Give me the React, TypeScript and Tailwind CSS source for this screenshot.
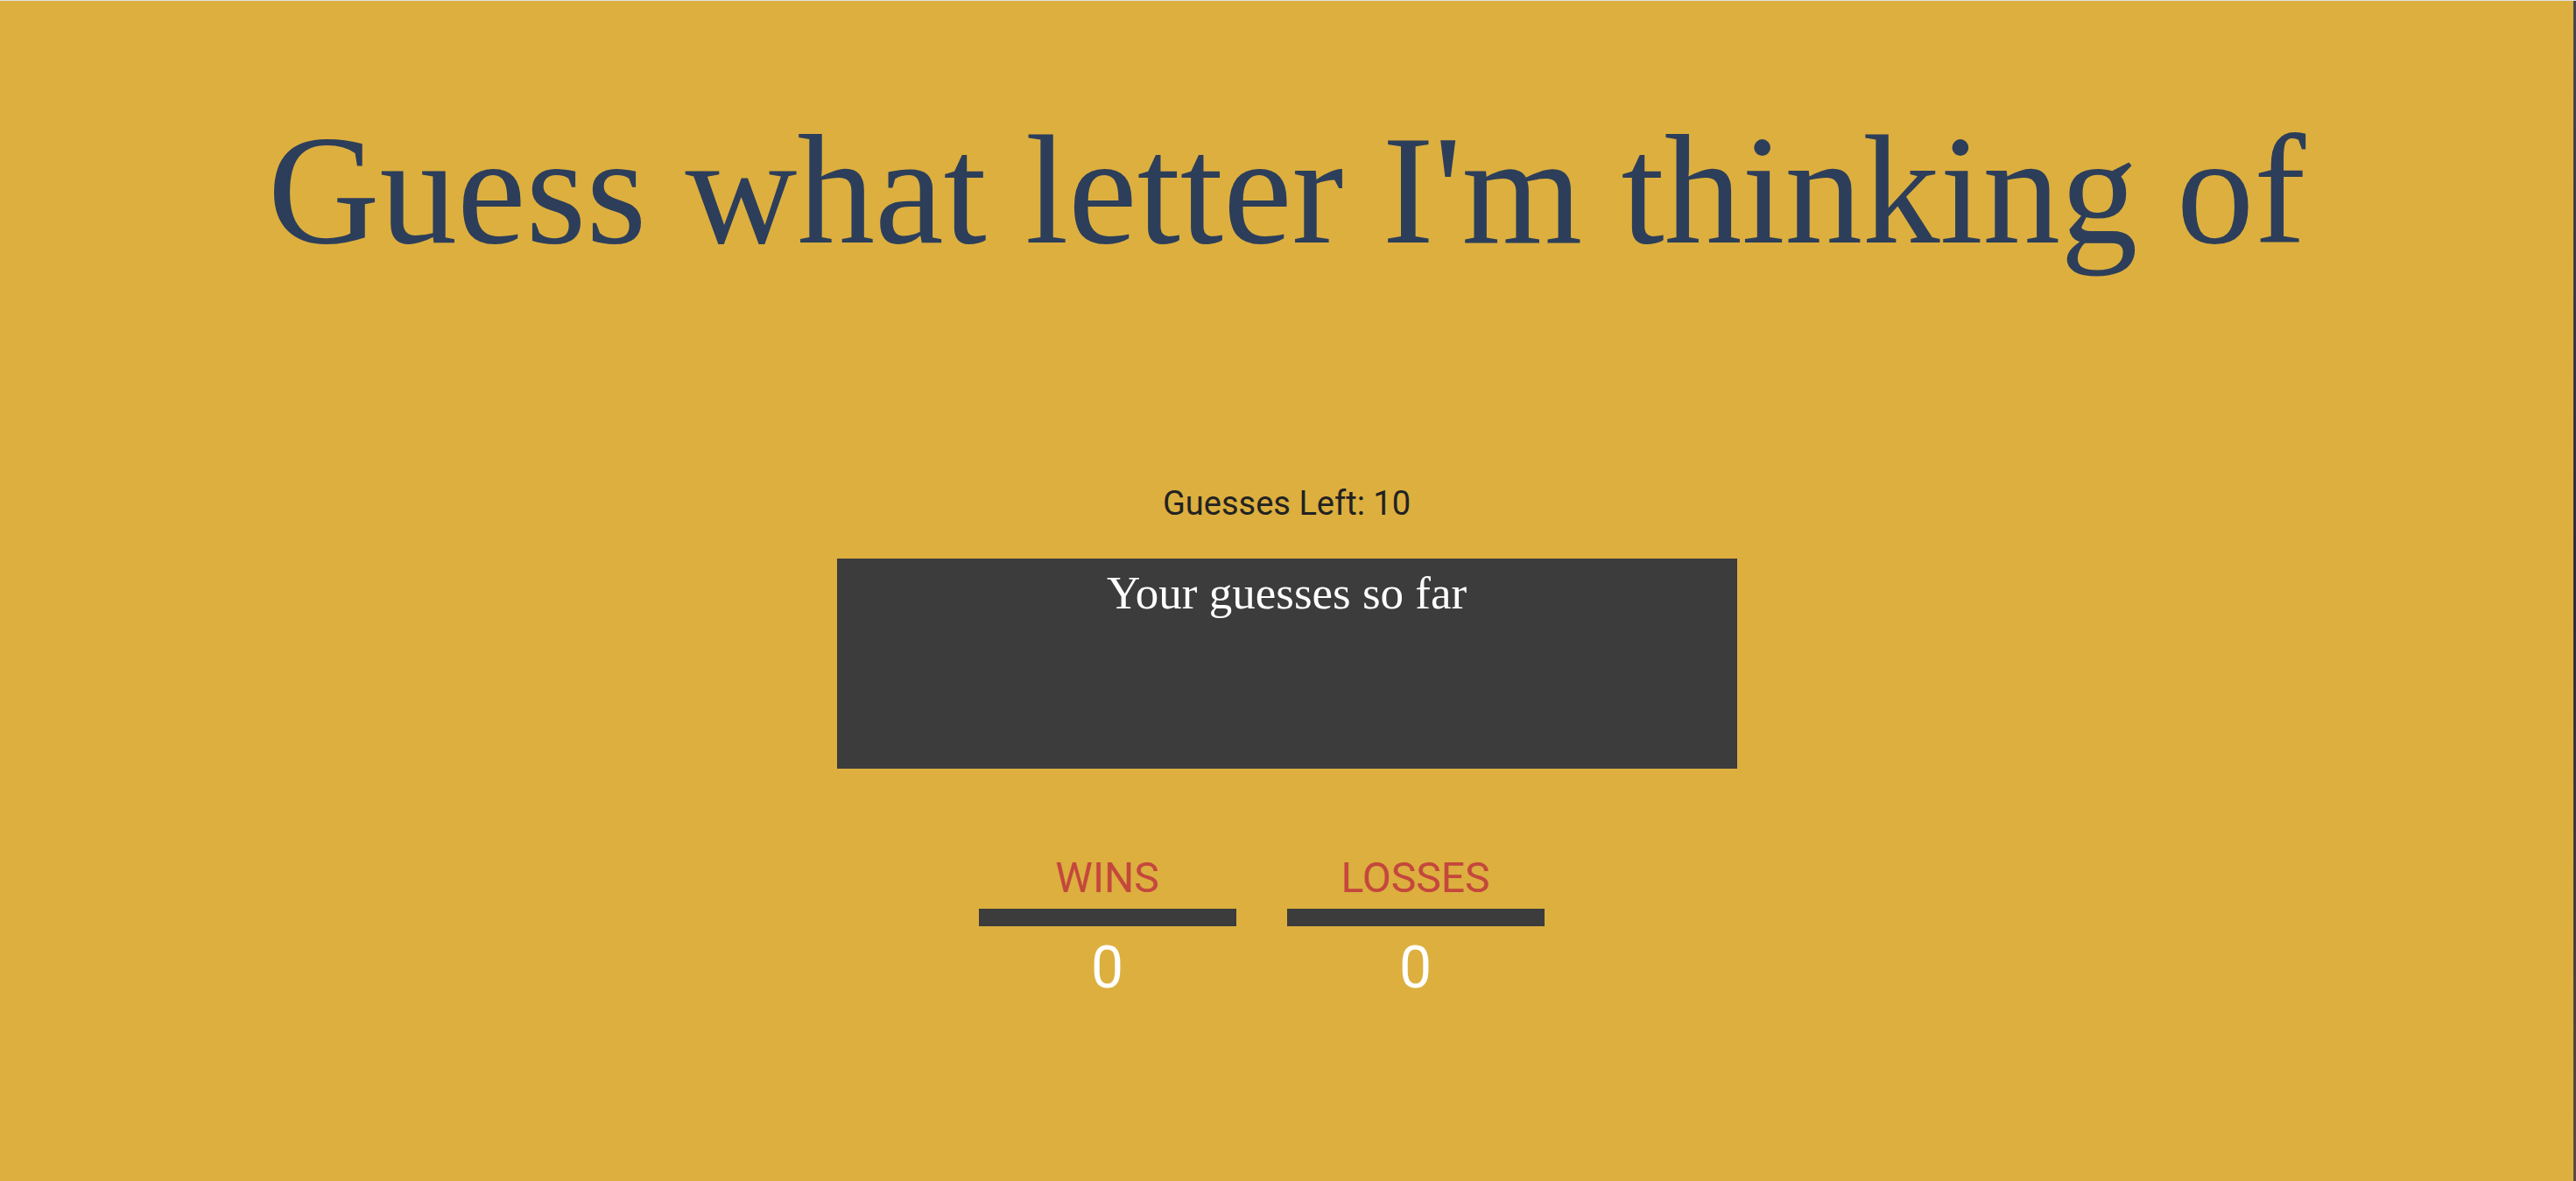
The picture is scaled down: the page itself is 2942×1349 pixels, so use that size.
import React from 'react';

const serif = "font-['Liberation_Serif',_'Times_New_Roman',serif]";
const sans = "font-['Roboto',_'Liberation_Sans',sans-serif]";

const StatColumn: React.FC<{ label: string; value: number }> = ({ label, value }) => (
  <div className="w-[294px] mr-[58px] flex flex-col items-center">
    <p className={`${sans} text-[48px] leading-[56px] text-[#c4473c]`}>{label}</p>
    <div className="w-full h-[20px] mt-[7px] bg-[#3c3c3c]" />
    <p className={`${sans} text-[66px] leading-[77px] mt-[9px] text-white`}>{value}</p>
  </div>
);

export default function App() {
  const guessesLeft = 10;
  const guesses: string[] = [];

  return (
    <div className="w-[2942px] h-[1349px] flex bg-[#dcaf3f] border-t border-[#e2e2e2] overflow-hidden">
      <div className="w-[2939px] flex flex-col items-center">
        <h1 className={`${serif} text-[177px] leading-[196px] mt-[118px] text-[#2c3e5a] whitespace-nowrap`}>
          Guess what letter I'm thinking of
        </h1>

        <p className={`${sans} text-[38px] leading-[44px] mt-[238px] text-[#222222]`}>
          Guesses Left: {guessesLeft}
        </p>

        <div className="w-[1028px] h-[240px] mt-[41px] bg-[#3c3c3c] pt-[10px] flex flex-col items-center">
          <p className={`${serif} text-[53px] leading-[58px] text-white`}>Your guesses so far</p>
          <p className={`${serif} text-[53px] leading-[58px] text-white`}>{guesses.join(', ')}</p>
        </div>

        <div className="flex mt-[97px]">
          <StatColumn label="WINS" value={0} />
          <StatColumn label="LOSSES" value={0} />
        </div>
      </div>
      {/* sliver of the window behind */}
      <div className="w-[3px] h-full bg-gradient-to-b from-[#4a4550] via-[#2e2a3a] to-[#5a4a40]" />
    </div>
  );
}
